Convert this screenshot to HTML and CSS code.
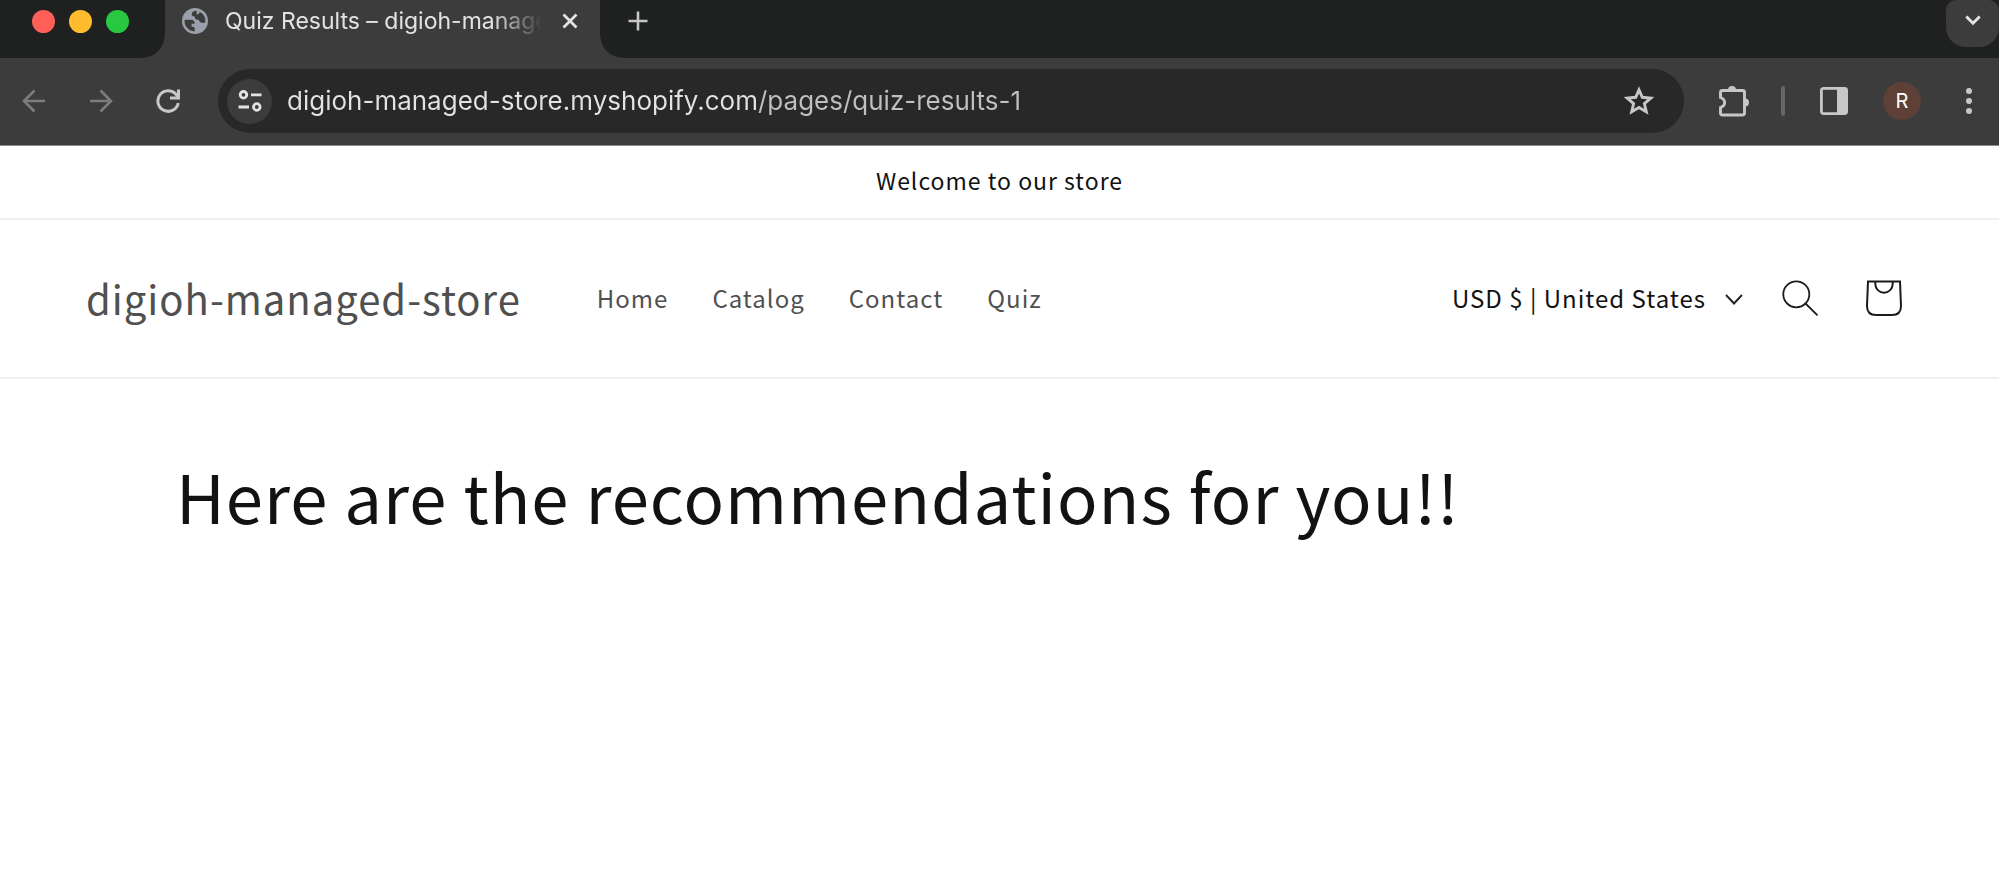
FILE: index.html
```html
<!DOCTYPE html>
<html lang="en">
<head>
<meta charset="utf-8">
<title>Quiz Results – digioh-managed-store</title>
<link rel="stylesheet" href="styles.css">
</head>
<body>
<div class="browser">
  <div class="tab-strip">
    <div class="window-controls">
      <button class="dot dot-close" aria-label="Close window"></button>
      <button class="dot dot-minimize" aria-label="Minimize window"></button>
      <button class="dot dot-zoom" aria-label="Zoom window"></button>
    </div>
    <div class="tab">
      <svg class="favicon" viewBox="0 0 26 26" aria-hidden="true">
        <circle cx="13" cy="13" r="13" fill="#9aa0a9"/>
        <path d="M2.600 11.800H8.500C11.500 11.800 12.800 13.200 12.700 15.700H9.600V18.800C12.600 18.600 13 19.800 12.700 23.400A10.400 10.400 0 0 1 2.600 11.800Z" fill="#3c3c3c"/>
        <path d="M14.500 2.800C11.500 3 9.800 4.200 9.800 6.200C9.800 8 11 8.300 12.700 8.400C12.900 11 14 11.800 16.800 11.800C17.200 13.900 18.400 14.700 20 14.700H23.200A10.400 10.400 0 0 0 17.500 3.800C17.500 5.500 16.800 6.500 14.700 6.500Z" fill="#3c3c3c"/>
      </svg>
      <span class="tab-title">Quiz Results – digioh-manage</span>
      <button class="icon-button" aria-label="Close tab">
        <svg width="16" height="16" viewBox="0 0 16 16"><path d="M1.500 1.500L14.500 14.500M14.500 1.500L1.500 14.500" stroke="#e3e3e3" stroke-width="2.800"/></svg>
      </button>
    </div>
    <button class="icon-button new-tab" aria-label="New tab">
      <svg width="20" height="20" viewBox="0 0 20 20"><path d="M10 .5V19.500M.5 10H19.500" stroke="#c7c7c7" stroke-width="2.600"/></svg>
    </button>
    <button class="tab-search" aria-label="Search tabs">
      <svg width="16" height="11" viewBox="0 0 16 11"><path d="M1.300 1.500L8 8.200L14.700 1.500" fill="none" stroke="#e3e3e3" stroke-width="3"/></svg>
    </button>
  </div>
  <div class="toolbar">
    <div class="history">
      <button class="icon-button" aria-label="Back">
        <svg width="24" height="24" viewBox="0 0 24 24"><path d="M23 12H2M12.500 1.500L2 12L12.500 22.500" fill="none" stroke="#7d7d7d" stroke-width="2.600"/></svg>
      </button>
      <button class="icon-button" aria-label="Forward">
        <svg width="24" height="24" viewBox="0 0 24 24"><path d="M1 12H22M11.500 1.500L22 12L11.500 22.500" fill="none" stroke="#7d7d7d" stroke-width="2.600"/></svg>
      </button>
      <button class="icon-button" aria-label="Reload">
        <svg width="24" height="24" viewBox="0 0 24 24"><path d="M22.300 14A10.300 10.300 0 1 1 20 5.300L22 8" fill="none" stroke="#c7c7c7" stroke-width="3"/><path d="M22.500 .5V9H14" fill="none" stroke="#c7c7c7" stroke-width="3"/></svg>
      </button>
    </div>
    <div class="omnibox">
      <button class="site-info" aria-label="View site information">
        <svg width="24" height="22" viewBox="0 0 24 22" fill="none" stroke="#e3e3e3" stroke-width="2.800"><circle cx="5.500" cy="4.800" r="3.300"/><path d="M13 4.800H23.500M.5 17H11"/><circle cx="18.800" cy="17" r="3.300"/></svg>
      </button>
      <input class="url" type="text" aria-label="Address and search bar" value="digioh-managed-store.myshopify.com/pages/quiz-results-1">
      <button class="icon-button" aria-label="Bookmark this page">
        <svg width="32" height="30" viewBox="0 0 32 30"><path d="M16 3.800L19.300 11.300L27.800 12.100L21.400 17.600L23.300 25.700L16 21.400L8.700 25.700L10.600 17.600L4.200 12.100L12.700 11.300Z" fill="none" stroke="#c7c7c7" stroke-width="2.900"/></svg>
      </button>
    </div>
    <div class="actions">
      <button class="icon-button" aria-label="Extensions">
        <svg width="32" height="32" viewBox="0 0 32 32"><path d="M4.500 5.500H24.500Q26.500 5.500 26.500 7.500V28Q26.500 30 24.500 30H4.500Q2.500 30 2.500 28V22.500C8 20.500 8 14.500 2.500 12.500V7.500Q2.500 5.500 4.500 5.500Z" fill="none" stroke="#c7c7c7" stroke-width="2.900"/><path d="M10 5A4 4 0 0 1 18 5ZM27 13.500A4 4 0 0 1 27 21.500Z" fill="#c7c7c7"/></svg>
      </button>
      <span class="divider"></span>
      <button class="icon-button" aria-label="Side panel">
        <svg width="28" height="28" viewBox="0 0 28 28"><rect x="1.400" y="1.400" width="25.200" height="25.200" rx="2" fill="none" stroke="#c7c7c7" stroke-width="2.800"/><path d="M17 1H27V27H17Z" fill="#c7c7c7"/></svg>
      </button>
      <button class="avatar" aria-label="Profile">R</button>
      <button class="icon-button" aria-label="Menu">
        <svg width="8" height="28" viewBox="0 0 8 28" fill="#c7c7c7"><circle cx="4" cy="4" r="3"/><circle cx="4" cy="14" r="3"/><circle cx="4" cy="24" r="3"/></svg>
      </button>
    </div>
  </div>
</div>

<p class="announcement">Welcome to our store</p>

<header class="store-header">
  <a class="store-name" href="#">digioh-managed-store</a>
  <nav class="store-nav">
    <a href="#">Home</a>
    <a href="#">Catalog</a>
    <a href="#">Contact</a>
    <a href="#">Quiz</a>
  </nav>
  <div class="store-tools">
    <div class="country">
      <select class="country-select" aria-label="Country/region">
        <option>USD $ | United States</option>
      </select>
      <svg class="country-caret" width="18" height="16" viewBox="0 0 18 16" aria-hidden="true"><path d="M1.500 5.500L9 13.500L16.500 5.500" fill="none" stroke="#222" stroke-width="1.900" stroke-linecap="round"/></svg>
    </div>
    <button class="icon-button" aria-label="Search">
      <svg width="36" height="36" viewBox="0 0 36 36" fill="none" stroke="#1c1c1c" stroke-width="1.800" stroke-linecap="round"><circle cx="14.300" cy="14.300" r="13"/><path d="M23.500 23.500L35 34.800"/></svg>
    </button>
    <a class="icon-button cart" href="#" aria-label="Cart">
      <svg width="36" height="36" viewBox="0 0 36 36" fill="none" stroke="#1c1c1c" stroke-width="2"><path d="M2 1.500H34L35 26Q35 35 26 35H10Q1 35 1 26Z"/><path d="M9.300 1.500V4A8.700 8.700 0 0 0 26.700 4V1.500"/></svg>
    </a>
  </div>
</header>

<main class="page">
  <h1>Here are the recommendations for you!!</h1>
</main>
</body>
</html>
```

FILE: styles.css
```css
* {
  box-sizing: border-box;
}

body {
  margin: 0;
  background: #fff;
  color: #121212;
  font-family: "Noto Sans CJK JP", "Noto Sans", sans-serif;
  letter-spacing: 1px;
}

button {
  padding: 0;
  border: 0;
  background: none;
  font: inherit;
}

a {
  color: inherit;
  text-decoration: none;
}

svg {
  display: block;
}

.icon-button {
  flex: none;
  display: flex;
}

/* Browser window */

.browser {
  background: #3c3c3c;
  font-family: Inter, "Liberation Sans", sans-serif;
  letter-spacing: normal;
}

.tab-strip {
  display: flex;
  height: 58px;
  padding-left: 32px;
  background: #1f2120;
}

.window-controls {
  display: flex;
  gap: 14px;
  width: 133px;
  padding-top: 10px;
}

.dot {
  width: 23px;
  height: 23px;
  border-radius: 50%;
}

.dot-close {
  background: #ff5f57;
}

.dot-minimize {
  background: #febc2e;
}

.dot-zoom {
  background: #28c840;
}

.tab {
  position: relative;
  display: flex;
  align-items: center;
  width: 435px;
  padding: 0 22px 17px 17px;
  background: #3c3c3c;
}

.tab::before,
.tab::after {
  content: "";
  position: absolute;
  bottom: 0;
  width: 22px;
  height: 22px;
}

.tab::before {
  right: 100%;
  background: radial-gradient(circle at 0 0, #1f2120 21px, #3c3c3c 22px);
}

.tab::after {
  left: 100%;
  background: radial-gradient(circle at 100% 0, #1f2120 21px, #3c3c3c 22px);
}

.favicon {
  flex: none;
  width: 26px;
  height: 26px;
}

.tab-title {
  flex: 1;
  min-width: 0;
  margin: 0 16px 0 17px;
  color: #e3e3e3;
  font-size: 23px;
  line-height: 30px;
  white-space: nowrap;
  mask-image: linear-gradient(to left, transparent 4px, #000 54px);
}

.new-tab {
  align-self: flex-start;
  margin: 11px 0 0 28px;
}

.tab-search {
  display: flex;
  justify-content: center;
  width: 53px;
  height: 47px;
  margin-left: auto;
  padding-top: 15px;
  border-radius: 10px 10px 20px 20px;
  background: #3c3c3c;
}

.toolbar {
  display: flex;
  align-items: center;
  padding: 11px 26px 12px 22px;
  border-bottom: 1px solid #8a8a8a;
}

.history {
  display: flex;
  gap: 43px;
  margin-right: 38px;
}

.omnibox {
  flex: 1;
  display: flex;
  align-items: center;
  height: 64px;
  padding: 0 29px 0 9px;
  border-radius: 32px;
  background: #282828;
}

.site-info {
  display: flex;
  align-items: center;
  justify-content: center;
  width: 45px;
  height: 45px;
  border-radius: 50%;
  background: #3c3c3c;
}

.url {
  flex: 1;
  min-width: 0;
  margin-left: 15px;
  padding: 0;
  border: 0;
  outline: 0;
  background: linear-gradient(to right, #e3e3e3 471px, #c0c0c0 471px) text;
  color: transparent;
  font: 26px/40px Inter, "Liberation Sans", sans-serif;
}

.actions {
  display: flex;
  align-items: center;
  margin-left: 34px;
}

.divider {
  width: 4px;
  height: 30px;
  margin: 0 35px 0 31px;
  border-radius: 2px;
  background: #666;
}

.avatar {
  width: 38px;
  height: 38px;
  margin: 0 44px 0 35px;
  border-radius: 50%;
  background: #5f4037;
  color: #fff;
  font-size: 20px;
}

/* Store page */

.announcement {
  margin: 0;
  padding: 17px 20px 21px;
  border-bottom: 2px solid #efefef;
  font-size: 23px;
  line-height: 34px;
  text-align: center;
}

.store-header {
  display: flex;
  align-items: center;
  padding: 48px 97px 49px 86px;
  border-bottom: 2px solid #efefef;
}

.store-name {
  color: #505050;
  font-size: 40px;
  line-height: 60px;
}

.store-nav {
  display: flex;
  gap: 44px;
  margin-left: 76px;
  color: #505050;
  font-size: 24px;
  line-height: 36px;
}

.store-tools {
  display: flex;
  align-items: center;
  gap: 39px;
  margin-left: auto;
}

.cart {
  margin-left: 9px;
}

.country {
  position: relative;
}

.country-select {
  appearance: none;
  padding: 0 36px 0 0;
  border: 0;
  background: none;
  color: #121212;
  font: inherit;
  font-size: 24px;
  line-height: 36px;
  letter-spacing: inherit;
}

.country-caret {
  position: absolute;
  top: 50%;
  right: 0;
  transform: translateY(-50%);
  pointer-events: none;
}

.page {
  padding: 66px 176px;
}

h1 {
  margin: 0;
  font-size: 67px;
  font-weight: 400;
  line-height: 100px;
}
```
